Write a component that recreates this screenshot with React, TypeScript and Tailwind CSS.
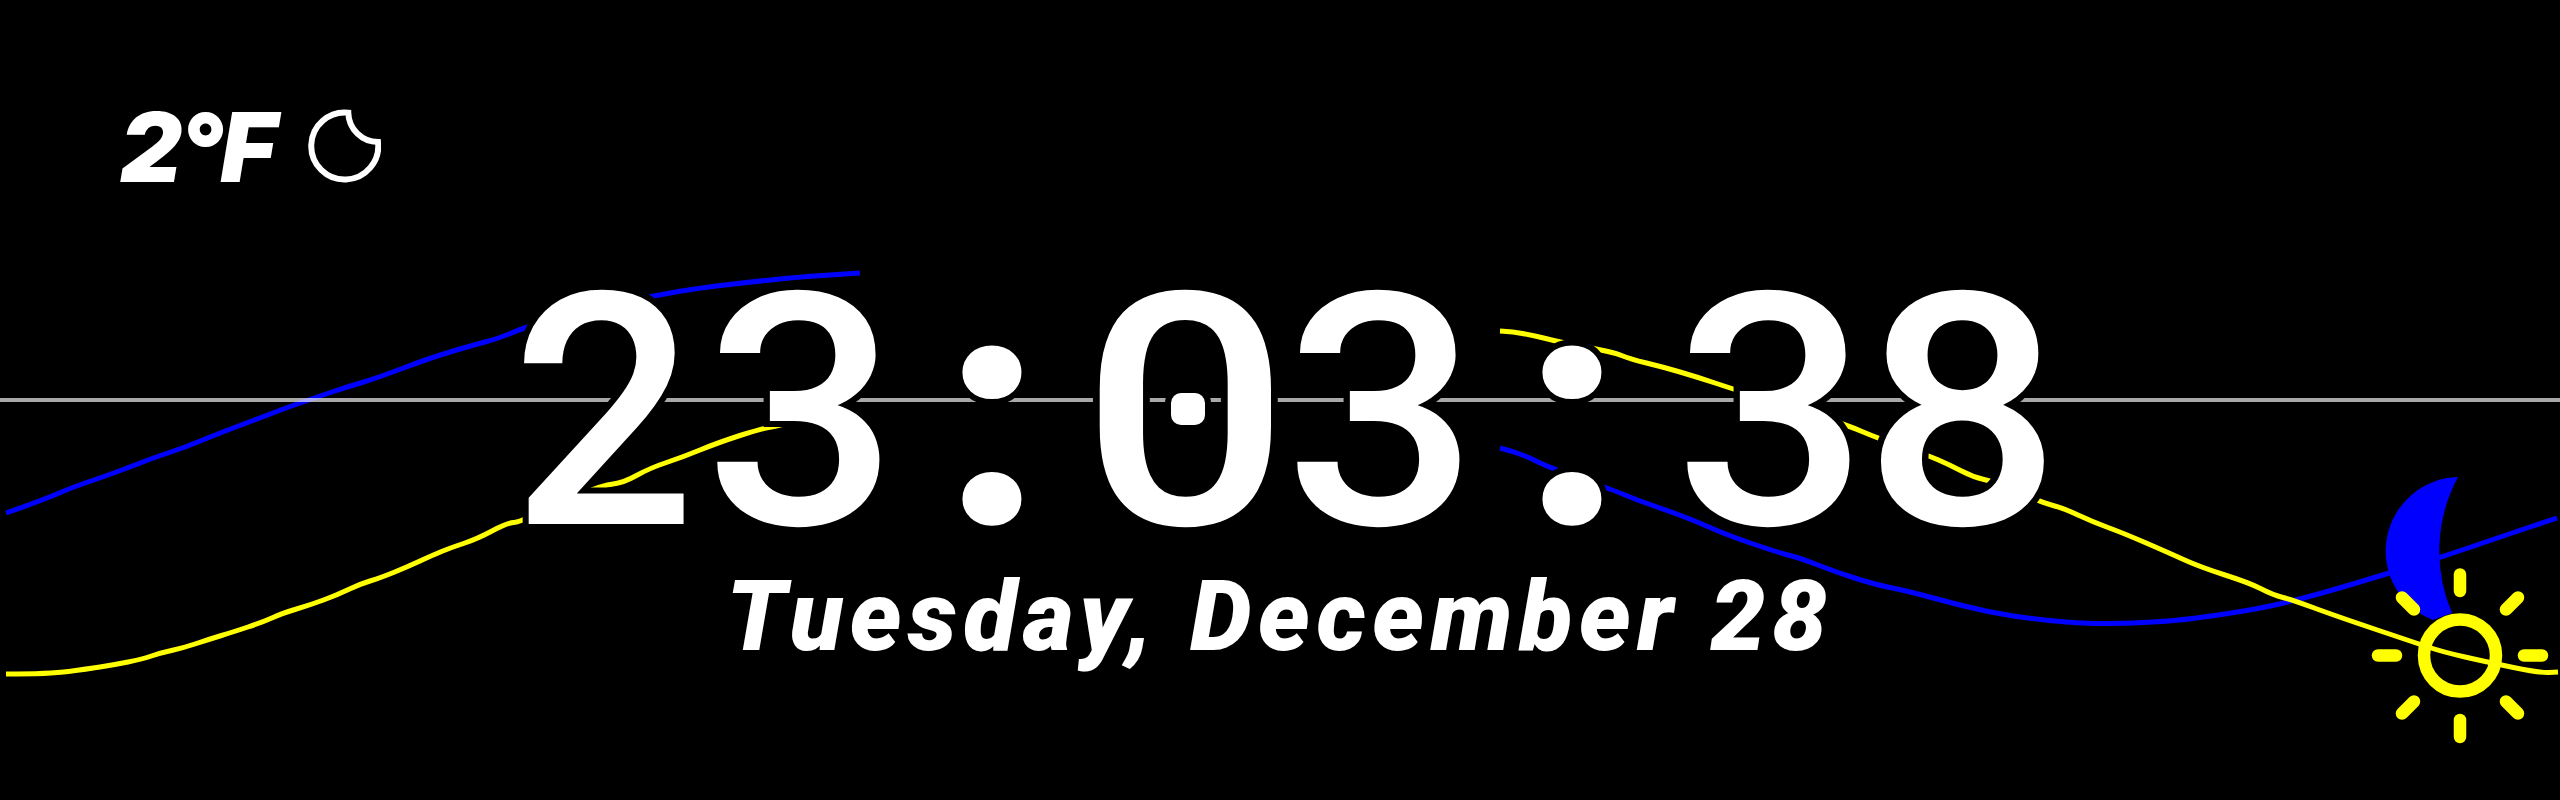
const blueLeft = "6,513 43,500 73,487 100,478 130,467 153,458 183,448 210,437 233,428 260,418 283,409 320,396 347,387 377,378 430,358 470,346 500,338 523,328 560,318 610,306 657,295 700,288 750,282 800,277 830,275 860,273";
const yellowLeft = "6,674 50,674 87,669 113,665 143,659 160,653 183,648 210,639 233,632 263,622 283,613 310,605 337,595 360,584 380,578 407,567 433,555 450,548 477,539 507,523 520,522 560,503 603,485 623,483 650,468 683,457 717,443 763,428 780,426 815,413 847,402 860,395";
const blueRight = "1500,448 1520,453 1550,468 1613,490 1637,500 1663,509 1693,520 1720,532 1747,542 1780,553 1800,558 1833,571 1873,584 1907,591 1933,598 1987,612 2040,620 2093,624 2133,623 2173,621 2220,615 2267,607 2300,599 2333,590 2383,575 2442,557 2500,537 2557,518";
const yellowRight = "1500,331 1520,332 1563,343 1613,352 1630,359 1663,367 1697,377 1733,389 1790,407 1847,425 1877,438 1927,455 1950,465 1973,477 1995,482 2043,503 2063,508 2093,522 2123,533 2167,552 2200,567 2250,583 2273,595 2293,600 2333,615 2413,642 2443,652 2487,662 2540,673 2558,672";

function smooth(points: string) {
  const p = points.split(" ").map((s) => s.split(",").map(Number));
  let d = `M${p[0][0]} ${p[0][1]}`;
  for (let i = 1; i < p.length - 1; i++) {
    const mx = (p[i][0] + p[i + 1][0]) / 2;
    const my = (p[i][1] + p[i + 1][1]) / 2;
    d += ` Q${p[i][0]} ${p[i][1]} ${mx} ${my}`;
  }
  const l = p[p.length - 1];
  return d + ` L${l[0]} ${l[1]}`;
}

const rays = [
  [2460, 574.5, 2460, 591],
  [2460, 720, 2460, 737],
  [2378, 655.5, 2396, 655.5],
  [2524, 655.5, 2542, 655.5],
  [2506, 609.5, 2518, 597.5],
  [2402, 713.5, 2414, 701.5],
  [2402, 597.5, 2414, 609.5],
  [2506, 701.5, 2518, 713.5],
];

const glyphClass: Record<string, string> = {
  "2": "-translate-x-[4px]",
  "3": "translate-x-[4px] scale-x-[1.05]",
  "0": "-translate-x-[2px] scale-x-[1.13]",
  "8": "translate-x-[5px] scale-x-[1.07]",
};

function Cell({ ch }: { ch: string }) {
  if (ch === ":") {
    return <span className="flex w-[200px] justify-center font-black">{ch}</span>;
  }
  return (
    <span className="relative flex w-[190px] justify-center">
      <span className={`inline-block ${glyphClass[ch]}`}>{ch}</span>
      {ch === "0" && (
        <span className="absolute left-1/2 top-[143px] h-[32px] w-[34px] -translate-x-1/2 rounded-[10px] bg-white ring-[6px] ring-black" />
      )}
    </span>
  );
}

export default function App() {
  return (
    <div className="relative flex h-[800px] w-full flex-col overflow-hidden bg-black text-white">
      <svg className="absolute inset-0 h-[800px] w-[2560px]" viewBox="0 0 2560 800" fill="none">
        <path d={smooth(blueLeft)} stroke="#0000ff" strokeWidth="5" />
        <path d={smooth(blueRight)} stroke="#0000ff" strokeWidth="5" />
        <path d={smooth(yellowLeft)} stroke="#ffff00" strokeWidth="5" />
        <path d={smooth(yellowRight)} stroke="#ffff00" strokeWidth="5" />
        <line x1="0" y1="400" x2="2560" y2="400" stroke="#ffffff" strokeOpacity="0.66" strokeWidth="4" />
        <path d="M2458 477 A74 74 0 0 0 2433 620 L2452 613 A157 157 0 0 1 2458 477 Z" fill="#0000ff" />
        <circle cx="2460" cy="655.5" r="36" stroke="#ffff00" strokeWidth="12.5" />
        {rays.map((r, i) => (
          <line key={i} x1={r[0]} y1={r[1]} x2={r[2]} y2={r[3]} stroke="#ffff00" strokeWidth="12.5" strokeLinecap="round" />
        ))}
      </svg>

      <div className="relative ml-[120px] mt-[99px] flex h-[96px] items-center font-['Inter',sans-serif] text-[96px] font-black italic leading-none tracking-[-3px]">
        <span>2°F</span>
        <svg className="ml-[31px] h-[76px] w-[76px]" viewBox="0 0 76 76" fill="none">
          <path d="M43.3 3.7 A33.5 33.5 0 1 0 73 33 A30 30 0 0 1 43.3 3.7 Z" stroke="#ffffff" strokeWidth="6" />
        </svg>
      </div>

      <div className="relative mt-[55px] flex h-[318px] items-baseline justify-center pl-[5px] font-['Roboto',sans-serif] text-[325px] font-medium leading-none [-webkit-text-stroke:12px_black] [paint-order:stroke_fill]">
        {"23:03:38".split("").map((c, i) => (
          <Cell key={i} ch={c} />
        ))}
      </div>

      <div className="relative text-center font-['Roboto',sans-serif] text-[98px] font-black italic leading-none tracking-[6.5px]">
        Tuesday, December 28
      </div>
    </div>
  );
}
